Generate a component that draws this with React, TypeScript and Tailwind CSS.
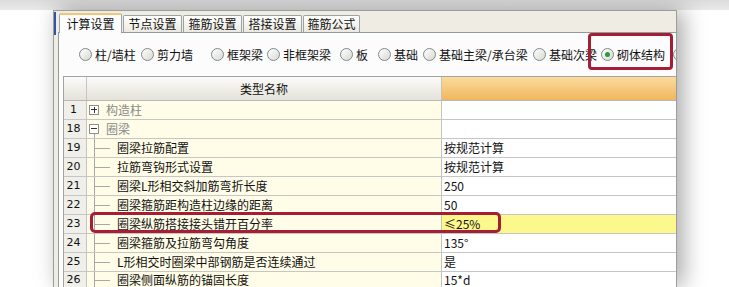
import React from "react";

const radios: { label: string; w: string; checked?: boolean }[] = [
  { label: "柱/墙柱", w: "w-[62px]" },
  { label: "剪力墙", w: "w-[70px]" },
  { label: "框架梁", w: "w-[56px]" },
  { label: "非框架梁", w: "w-[73px]" },
  { label: "板", w: "w-[38px]" },
  { label: "基础", w: "w-[45px]" },
  { label: "基础主梁/承台梁", w: "w-[110px]" },
  { label: "基础次梁", w: "w-[68px]" },
  { label: "砌体结构", w: "w-[72px]", checked: true },
];

type Row = {
  n: string;
  name: string;
  value?: string;
  kind: "plus" | "minus" | "child";
  hl?: boolean;
  last?: boolean;
};

const rows: Row[] = [
  { n: "1", name: "构造柱", kind: "plus" },
  { n: "18", name: "圈梁", kind: "minus" },
  { n: "19", name: "圈梁拉筋配置", value: "按规范计算", kind: "child" },
  { n: "20", name: "拉筋弯钩形式设置", value: "按规范计算", kind: "child" },
  { n: "21", name: "圈梁L形相交斜加筋弯折长度", value: "250", kind: "child" },
  { n: "22", name: "圈梁箍筋距构造柱边缘的距离", value: "50", kind: "child" },
  { n: "23", name: "圈梁纵筋搭接接头错开百分率", value: "≤25%", kind: "child", hl: true },
  { n: "24", name: "圈梁箍筋及拉筋弯勾角度", value: "135°", kind: "child" },
  { n: "25", name: "L形相交时圈梁中部钢筋是否连续通过", value: "是", kind: "child" },
  { n: "26", name: "圈梁侧面纵筋的锚固长度", value: "15*d", kind: "child", last: true },
];

function Radio({ checked }: { checked?: boolean }) {
  return (
    <div className="w-[13px] h-[13px] shrink-0 rounded-full border border-[#7d8a92] bg-linear-to-br from-[#ffffff] to-[#d9d8d0] flex items-center justify-center">
      {checked && <div className="w-[5px] h-[5px] rounded-full bg-[#2c9a36]" />}
    </div>
  );
}

function Box({ sign }: { sign: "plus" | "minus" }) {
  return (
    <div className="relative w-[10px] h-[10px] shrink-0 border border-[#8e8e8e] bg-white">
      <div className="absolute left-[1px] top-[3px] w-[6px] h-[1px] bg-[#333]" />
      {sign === "plus" && <div className="absolute left-[3.5px] top-[1px] w-[1px] h-[6px] bg-[#333]" />}
    </div>
  );
}

export default function App() {
  return (
    <div className="relative w-[729px] h-[287px] overflow-hidden bg-white font-['Noto_Sans_CJK_SC',sans-serif] text-[12px] text-[#111]">
      <div className="h-[10px] bg-linear-to-b from-[#dcdcdc] to-[#e9e9e9]" />
      <div className="flex">
        <div className="w-[53px] shrink-0" />
        <div className="relative w-[624px] h-[277px] shrink-0 overflow-hidden border-l border-t border-r border-[#9c9c9c] bg-[#efede3] shadow-[6px_0_22px_rgba(0,0,0,0.35)]">
          <div className="absolute left-[-1px] top-[1px] w-[3px] h-[23px] bg-[#2f55a4]" />
          {/* tabs */}
          <div className="flex items-end h-[20px] pl-[5px] mt-[1px]">
            <div className="relative z-10 w-[63px] h-[20px] -mb-[1px] flex items-center justify-center bg-[#fcfcfd] border border-b-0 border-[#9aa2a6] border-t-2 border-t-[#efc778] rounded-t-[2px]">
              计算设置
            </div>
            {["节点设置", "箍筋设置", "搭接设置", "箍筋公式"].map((t, i) => (
              <div
                key={t}
                className={`${i === 3 ? "w-[57px]" : "w-[59px]"} h-[17px] ml-[1px] flex items-center justify-center bg-linear-to-b from-[#ffffff] to-[#ebe9e1] border border-b-0 border-[#9aa2a6] rounded-t-[2px]`}
              >
                {t}
              </div>
            ))}
          </div>
          {/* panel */}
          <div className="ml-[4px] border-l border-t border-[#919b9c] bg-[#fcfcfc] h-full">
            <div className="h-[43px] flex items-center pl-[20px] flex-nowrap">
              {radios.map((r) => (
                <div key={r.label} className={`${r.w} shrink-0 flex items-center`}>
                  <Radio checked={r.checked} />
                  <span className="ml-[3px] whitespace-nowrap">{r.label}</span>
                </div>
              ))}
              <Radio />
            </div>
            {/* grid */}
            <div className="ml-[4px] border-l border-t border-[#a3a3a3] bg-white leading-[14px]">
              <div className="flex h-[24px] border-b border-[#b8b8b8]">
                <div className="w-[23px] shrink-0 border-r border-[#c4c4c4] bg-linear-to-b from-[#fbfbf9] to-[#e4e2da]" />
                <div className="w-[355px] shrink-0 border-r border-[#c4c4c4] bg-linear-to-b from-[#fbfbf9] to-[#e4e2da] flex items-center justify-center">
                  类型名称
                </div>
                <div className="flex-1 bg-linear-to-b from-[#fbdb9c] to-[#f0b75c]" />
              </div>
              {rows.map((r) => (
                <div key={r.n} className={`flex ${r.last ? "h-[16px]" : "h-[19px] border-b border-[#c6c6c6]"}`}>
                  <div className="w-[23px] shrink-0 border-r border-[#c4c4c4] bg-[#f0efea] flex items-center justify-center pr-[3px] font-['DejaVu_Sans',sans-serif] text-[11px]">
                    {r.n}
                  </div>
                  <div className="w-[355px] shrink-0 border-r border-[#c4c4c4] bg-[#fffde8] flex items-stretch">
                    {r.kind === "child" ? (
                      <>
                        <div className="w-[7px] shrink-0" />
                        <div className="w-[1px] shrink-0 bg-[#a8a8a8]" />
                        <div className="w-[15px] h-[1px] self-center shrink-0 bg-[#a8a8a8]" />
                        <span className="ml-[7px] self-center whitespace-nowrap">{r.name}</span>
                      </>
                    ) : (
                      <>
                        <div className="w-[2px] shrink-0" />
                        <div className="w-[10px] shrink-0 flex flex-col items-center">
                          <div className="h-[4px] shrink-0" />
                          <Box sign={r.kind} />
                          {r.kind === "minus" && <div className="flex-1 w-[1px] bg-[#a8a8a8]" />}
                        </div>
                        <span className="ml-[7px] self-center whitespace-nowrap text-[#8a8a8a]">{r.name}</span>
                      </>
                    )}
                  </div>
                  <div className={`flex-1 flex items-center pl-[2px] whitespace-nowrap ${r.hl ? "bg-[#fdf88c]" : "bg-white"}`}>
                    {r.value}
                  </div>
                </div>
              ))}
            </div>
          </div>
        </div>
      </div>
      {/* red highlight boxes */}
      <div className="absolute left-[588px] top-[33px] w-[85px] h-[37px] border-[3px] border-[#a61e34] rounded-[4px]" />
      <div className="absolute left-[90px] top-[212px] w-[411px] h-[21px] border-[3px] border-[#a61e34] rounded-[5px]" />
    </div>
  );
}
